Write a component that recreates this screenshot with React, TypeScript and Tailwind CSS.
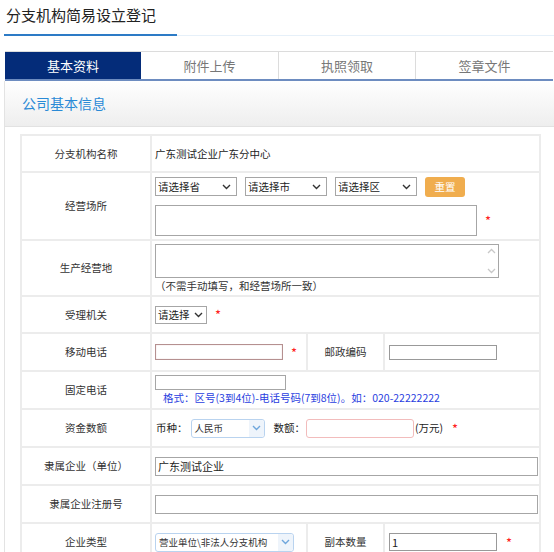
import React from "react";

const font = { fontFamily: '"Noto Sans CJK SC", "Noto Sans", sans-serif' };

function Chevron({ color = "#333" }: { color?: string }) {
  return (
    <svg width="9" height="6" viewBox="0 0 9 6" fill="none">
      <path d="M1 1l3.5 3.5L8 1" stroke={color} strokeWidth="1.4" />
    </svg>
  );
}

function Sel({ text, w }: { text: string; w: string }) {
  return (
    <div className={`${w} h-[19px] border border-[#a6a6a6] bg-white flex items-center justify-between pl-[2px] pr-[5px] text-[10.5px] text-[#222]`}>
      <span>{text}</span>
      <Chevron />
    </div>
  );
}

function BlueSel({ text, w }: { text: string; w: string }) {
  return (
    <div className={`${w} h-[19px] rounded-[3px] border border-[#b9d3ef] bg-white flex items-center justify-between pl-[3px] text-[9.5px] text-[#333]`}>
      <span>{text}</span>
      <div className="h-full w-[15px] flex items-center justify-center bg-[#eef4fb] rounded-r-[3px]">
        <Chevron color="#6ea6dc" />
      </div>
    </div>
  );
}

function Star({ className = "" }: { className?: string }) {
  return <span className={`text-[#ff2020] text-[13px] leading-none ${className}`}>*</span>;
}

const labelCls = "border-2 border-[#ececec] text-center text-[10.5px] text-[#333] align-middle";
const valCls = "border-2 border-[#ececec] px-[3px] align-middle text-[10.5px] text-[#222]";

export default function App() {
  return (
    <div className="w-[554px] h-[552px] overflow-hidden bg-white" style={font}>
      <div className="h-[34px] pl-[6px] pt-[5px] text-[15px] text-[#222] leading-[20px]">分支机构简易设立登记</div>
      <div className="flex items-center">
        <div className="w-[4px]" />
        <div className="w-[173px] h-[2px] bg-[#2d7bc6]" />
        <div className="flex-1 h-px bg-[#e6f0f9]" />
      </div>
      <div className="h-[15px]" />
      <div className="ml-[5px] w-[548px] flex h-[30px] border-t border-[#dcdcdc] border-b-2 border-b-[#6d8cc0] text-[13px]">
        <div className="w-[136px] bg-[#042c79] text-white flex items-center justify-center">基本资料</div>
        <div className="w-[138px] border-r border-[#dcdcdc] text-[#777] flex items-center justify-center">附件上传</div>
        <div className="w-[137px] border-r border-[#dcdcdc] text-[#777] flex items-center justify-center">执照领取</div>
        <div className="flex-1 text-[#777] flex items-center justify-center">签章文件</div>
      </div>
      <div className="ml-[4px] border-l border-[#e3e3e3] h-[500px]">
        <div className="h-[46px] bg-gradient-to-b from-white to-[#eeeeee] border-b border-[#e2e2e2] flex items-center pl-[17px] text-[14px] text-[#2a8ad6]">
          公司基本信息
        </div>
        <div className="pl-[15px] pt-[7px]">
          <table className="w-[521px] border-collapse table-fixed">
            <colgroup>
              <col className="w-[130px]" />
              <col className="w-[156px]" />
              <col className="w-[77px]" />
              <col />
            </colgroup>
            <tbody>
              <tr className="h-[37px]">
                <td className={labelCls}>分支机构名称</td>
                <td className={valCls} colSpan={3}>广东测试企业广东分中心</td>
              </tr>
              <tr className="h-[68px]">
                <td className={labelCls}>经营场所</td>
                <td className={valCls} colSpan={3}>
                  <div className="flex items-center gap-[8px]">
                    <Sel text="请选择省" w="w-[82px]" />
                    <Sel text="请选择市" w="w-[82px]" />
                    <Sel text="请选择区" w="w-[82px]" />
                    <div className="w-[40px] h-[20px] rounded-[3px] bg-[#f0ad4e] text-white text-[10.5px] flex items-center justify-center">重置</div>
                  </div>
                  <div className="flex items-center mt-[8px]">
                    <div className="w-[322px] h-[31px] border border-[#a6a6a6]" />
                    <Star className="ml-[8px]" />
                  </div>
                </td>
              </tr>
              <tr className="h-[56px]">
                <td className={labelCls}>生产经营地</td>
                <td className={valCls} colSpan={3}>
                  <div className="w-[344px] h-[34px] border border-[#a6a6a6] flex justify-end">
                    <div className="w-[14px] flex flex-col items-center justify-between py-[3px]">
                      <svg width="9" height="6" viewBox="0 0 9 6"><path d="M1 5l3.5-3.5L8 5" stroke="#c8c8c8" strokeWidth="1.3" fill="none" /></svg>
                      <svg width="9" height="6" viewBox="0 0 9 6"><path d="M1 1l3.5 3.5L8 1" stroke="#c8c8c8" strokeWidth="1.3" fill="none" /></svg>
                    </div>
                  </div>
                  <div className="mt-[1px] text-[10.5px] text-[#333] leading-[14px]">（不需手动填写，和经营场所一致）</div>
                </td>
              </tr>
              <tr className="h-[37px]">
                <td className={labelCls}>受理机关</td>
                <td className={valCls} colSpan={3}>
                  <div className="flex items-center">
                    <div className="w-[52px] h-[18px] border border-[#a6a6a6] flex items-center justify-between pl-[2px] pr-[3px] text-[10.5px]">
                      <span>请选择</span>
                      <Chevron />
                    </div>
                    <Star className="ml-[8px]" />
                  </div>
                </td>
              </tr>
              <tr className="h-[38px]">
                <td className={labelCls}>移动电话</td>
                <td className={valCls}>
                  <div className="flex items-center">
                    <div className="w-[128px] h-[16px] border border-[#b59090] shadow-[inset_0_0_1px_#c9a0a0]" />
                    <Star className="ml-[8px]" />
                  </div>
                </td>
                <td className={labelCls}>邮政编码</td>
                <td className={valCls}>
                  <div className="ml-[1px] w-[108px] h-[15px] border border-[#999]" />
                </td>
              </tr>
              <tr className="h-[38px]">
                <td className={labelCls}>固定电话</td>
                <td className={valCls} colSpan={3}>
                  <div className="w-[131px] h-[15px] border border-[#a6a6a6]" />
                  <div className="ml-[8px] mt-[1px] text-[10.5px] leading-[14px] text-[#2a3ee0] whitespace-nowrap">格式：区号(3到4位)-电话号码(7到8位)。如：020-22222222</div>
                </td>
              </tr>
              <tr className="h-[38px]">
                <td className={labelCls}>资金数额</td>
                <td className={valCls} colSpan={3}>
                  <div className="flex items-center whitespace-nowrap">
                    <span className="ml-[1px]">币种：</span>
                    <div className="ml-[3px]"><BlueSel text="人民币" w="w-[74px]" /></div>
                    <span className="ml-[9px]">数额：</span>
                    <div className="ml-[1px] w-[108px] h-[19px] rounded-[3px] border border-[#f2bcbc]" />
                    <span className="ml-[1px]">(万元)</span>
                    <Star className="ml-[9px]" />
                  </div>
                </td>
              </tr>
              <tr className="h-[38px]">
                <td className={labelCls}>隶属企业（单位）</td>
                <td className={valCls} colSpan={3}>
                  <div className="w-[383px] h-[19px] border border-[#a6a6a6] flex items-center pl-[2px] text-[11px] text-[#222]">广东测试企业</div>
                </td>
              </tr>
              <tr className="h-[38px]">
                <td className={labelCls}>隶属企业注册号</td>
                <td className={valCls} colSpan={3}>
                  <div className="w-[383px] h-[19px] border border-[#a6a6a6]" />
                </td>
              </tr>
              <tr className="h-[38px]">
                <td className={labelCls}>企业类型</td>
                <td className={valCls}>
                  <BlueSel text="营业单位\非法人分支机构" w="w-[139px]" />
                </td>
                <td className={labelCls}>副本数量</td>
                <td className={valCls}>
                  <div className="flex items-center">
                    <div className="ml-[1px] w-[108px] h-[18px] border border-[#999] flex items-center pl-[2px] text-[11px]">1</div>
                    <Star className="ml-[9px]" />
                  </div>
                </td>
              </tr>
            </tbody>
          </table>
        </div>
      </div>
    </div>
  );
}
